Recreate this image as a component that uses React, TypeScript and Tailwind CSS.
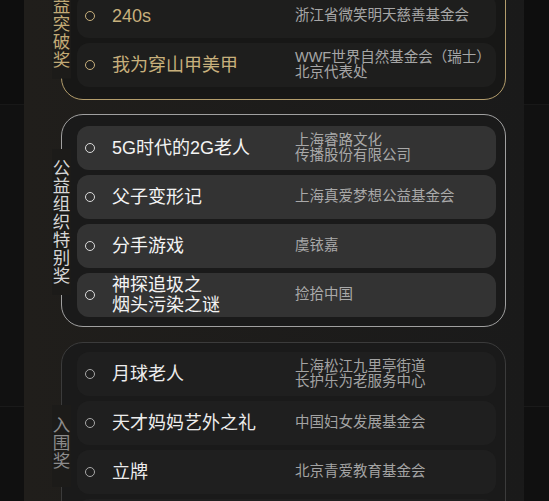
import React from 'react';

type Variant = 'gold' | 'silver' | 'dim';

const STY: Record<Variant, { box: string; row: string; title: string; org: string; dot: string; label: string }> = {
  gold: {
    box: 'border-[#b39d6c] bg-[#171716]',
    row: 'bg-[#1e1e1d]',
    title: 'text-[#c8b07c]',
    org: 'text-[#a6a6a6]',
    dot: 'border-[#c8b07c]',
    label: 'text-[#c2aa76]',
  },
  silver: {
    box: 'border-[#a0a0a0] bg-[#1a1a1a]',
    row: 'bg-[#333333]',
    title: 'text-[#f4f4f4]',
    org: 'text-[#a9a9a9]',
    dot: 'border-[#dcdcdc]',
    label: 'text-[#d6d6d6]',
  },
  dim: {
    box: 'border-[#3b3b3b] bg-[#1a1a1a]',
    row: 'bg-[#1f1f1f]',
    title: 'text-[#ececec]',
    org: 'text-[#a3a3a3]',
    dot: 'border-[#a8a8a8]',
    label: 'text-[#8c8c8c]',
  },
};

type Item = { title: string[]; org: string[] };

function Row({ item, v }: { item: Item; v: Variant }) {
  const s = STY[v];
  return (
    <div className={`flex h-[44px] items-center rounded-[12px] pl-[8px] ${s.row}`}>
      <div className={`h-[10px] w-[10px] shrink-0 rounded-full border-[1.5px] ${s.dot}`} />
      <div className={`ml-[17px] w-[183px] shrink-0 text-[18px] leading-[20px] ${s.title}`}>
        {item.title.map((t, i) => (
          <div key={i}>{t}</div>
        ))}
      </div>
      <div className={`text-[14.5px] leading-[15.5px] ${s.org}`}>
        {item.org.map((t, i) => (
          <div key={i}>{t}</div>
        ))}
      </div>
    </div>
  );
}

function Section({
  v,
  label,
  items,
  className,
  labelPos,
}: {
  v: Variant;
  label: string;
  items: Item[];
  className: string;
  labelPos: string;
}) {
  const s = STY[v];
  return (
    <div className={`relative ml-[37px] w-[445px] rounded-[22px] border ${s.box} ${className}`}>
      <div
        className={`absolute left-[-10px] flex w-[19px] flex-col items-center bg-[#1c1b19] text-[17.5px] leading-[18px] ${s.label} ${labelPos}`}
      >
        {label.split('').map((c, i) => (
          <span key={i}>{c}</span>
        ))}
      </div>
      <div className="ml-[15px] mr-[9px] flex flex-col gap-[5px]">
        {items.map((it, i) => (
          <Row key={i} item={it} v={v} />
        ))}
      </div>
    </div>
  );
}

export default function App() {
  const s1: Item[] = [
    { title: ['小行动大改变'], org: ['上海真爱梦想公益基金会'] },
    { title: ['240s'], org: ['浙江省微笑明天慈善基金会'] },
    { title: ['我为穿山甲美甲'], org: ['WWF世界自然基金会（瑞士）', '北京代表处'] },
  ];
  const s2: Item[] = [
    { title: ['5G时代的2G老人'], org: ['上海睿路文化', '传播股份有限公司'] },
    { title: ['父子变形记'], org: ['上海真爱梦想公益基金会'] },
    { title: ['分手游戏'], org: ['虞铱嘉'] },
    { title: ['神探追圾之', '烟头污染之谜'], org: ['捡拾中国'] },
  ];
  const s3: Item[] = [
    { title: ['月球老人'], org: ['上海松江九里亭街道', '长护乐为老服务中心'] },
    { title: ['天才妈妈艺外之礼'], org: ['中国妇女发展基金会'] },
    { title: ['立牌'], org: ['北京青爱教育基金会'] },
    { title: ['微光'], org: ['北京青爱教育基金会'] },
  ];
  return (
    <div className="h-[501px] w-[549px] overflow-hidden bg-[linear-gradient(to_bottom,#0e0e0e_0px,#0e0e0e_104px,#181818_104px,#181818_105px,#111111_105px,#111111_406px,#1a1a1a_406px,#1a1a1a_407px,#101010_407px)] font-['Liberation_Sans','Noto_Sans_CJK_SC',sans-serif]">
      <div className="ml-[24px] h-[501px] w-[500px] overflow-hidden bg-gradient-to-r from-[#201e1b] to-[#1a1a1a]">
        <Section
          v="gold"
          label="公益突破奖"
          items={s1}
          className="mt-[-67px] pb-[12px] pt-[11px]"
          labelPos="top-1/2 -translate-y-[44%] py-[10px]"
        />
        <Section
          v="silver"
          label="公益组织特别奖"
          items={s2}
          className="mt-[14px] pb-[9px] pt-[11px]"
          labelPos="top-[34px] pb-[10px] pt-[10px]"
        />
        <Section
          v="dim"
          label="入围奖"
          items={s3}
          className="mt-[15px] pb-[9px] pt-[9px]"
          labelPos="top-[62px] pb-[17px] pt-[11px]"
        />
      </div>
    </div>
  );
}
